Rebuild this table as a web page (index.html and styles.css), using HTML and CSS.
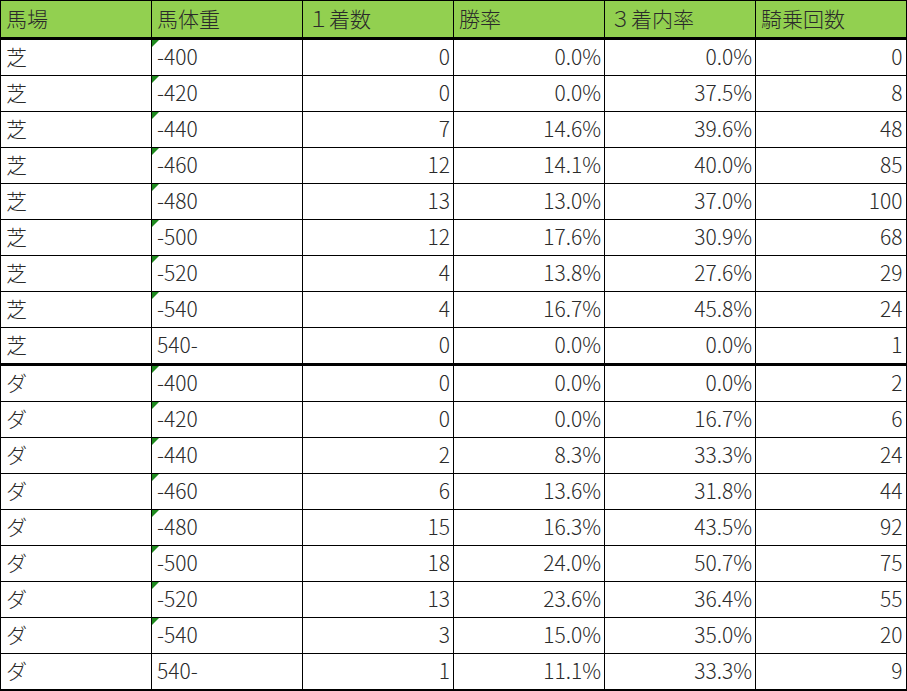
FILE: index.html
```html
<!DOCTYPE html>
<html lang="ja">
<head>
<meta charset="utf-8">
<link rel="stylesheet" href="styles.css">
</head>
<body>
<table class="sheet">
<colgroup>
<col class="c"><col class="c"><col class="c"><col class="c"><col class="c"><col class="c">
</colgroup>
<thead>
<tr><th>馬場</th><th>馬体重</th><th>１着数</th><th>勝率</th><th>３着内率</th><th>騎乗回数</th></tr>
</thead>
<tbody>
<tr><td>芝</td><td class="txt flag">-400</td><td class="num">0</td><td class="num">0.0%</td><td class="num">0.0%</td><td class="num">0</td></tr>
<tr><td>芝</td><td class="txt flag">-420</td><td class="num">0</td><td class="num">0.0%</td><td class="num">37.5%</td><td class="num">8</td></tr>
<tr><td>芝</td><td class="txt flag">-440</td><td class="num">7</td><td class="num">14.6%</td><td class="num">39.6%</td><td class="num">48</td></tr>
<tr><td>芝</td><td class="txt flag">-460</td><td class="num">12</td><td class="num">14.1%</td><td class="num">40.0%</td><td class="num">85</td></tr>
<tr><td>芝</td><td class="txt flag">-480</td><td class="num">13</td><td class="num">13.0%</td><td class="num">37.0%</td><td class="num">100</td></tr>
<tr><td>芝</td><td class="txt flag">-500</td><td class="num">12</td><td class="num">17.6%</td><td class="num">30.9%</td><td class="num">68</td></tr>
<tr><td>芝</td><td class="txt flag">-520</td><td class="num">4</td><td class="num">13.8%</td><td class="num">27.6%</td><td class="num">29</td></tr>
<tr><td>芝</td><td class="txt flag">-540</td><td class="num">4</td><td class="num">16.7%</td><td class="num">45.8%</td><td class="num">24</td></tr>
<tr class="group-end"><td>芝</td><td class="txt">540-</td><td class="num">0</td><td class="num">0.0%</td><td class="num">0.0%</td><td class="num">1</td></tr>
<tr><td>ダ</td><td class="txt flag">-400</td><td class="num">0</td><td class="num">0.0%</td><td class="num">0.0%</td><td class="num">2</td></tr>
<tr><td>ダ</td><td class="txt flag">-420</td><td class="num">0</td><td class="num">0.0%</td><td class="num">16.7%</td><td class="num">6</td></tr>
<tr><td>ダ</td><td class="txt flag">-440</td><td class="num">2</td><td class="num">8.3%</td><td class="num">33.3%</td><td class="num">24</td></tr>
<tr><td>ダ</td><td class="txt flag">-460</td><td class="num">6</td><td class="num">13.6%</td><td class="num">31.8%</td><td class="num">44</td></tr>
<tr><td>ダ</td><td class="txt flag">-480</td><td class="num">15</td><td class="num">16.3%</td><td class="num">43.5%</td><td class="num">92</td></tr>
<tr><td>ダ</td><td class="txt flag">-500</td><td class="num">18</td><td class="num">24.0%</td><td class="num">50.7%</td><td class="num">75</td></tr>
<tr><td>ダ</td><td class="txt flag">-520</td><td class="num">13</td><td class="num">23.6%</td><td class="num">36.4%</td><td class="num">55</td></tr>
<tr><td>ダ</td><td class="txt flag">-540</td><td class="num">3</td><td class="num">15.0%</td><td class="num">35.0%</td><td class="num">20</td></tr>
<tr><td>ダ</td><td class="txt">540-</td><td class="num">1</td><td class="num">11.1%</td><td class="num">33.3%</td><td class="num">9</td></tr>
</tbody>
</table>
</body>
</html>
```

FILE: styles.css
```css
html, body {
  margin: 0;
  padding: 0;
  background: #ffffff;
}

.sheet {
  border-collapse: collapse;
  table-layout: fixed;
  width: 907px;
  font-family: "Noto Sans CJK JP", "Noto Sans", sans-serif;
  font-size: 21px;
  font-weight: 300;
  color: #2a2a2a;
  border-top: 1px solid #000;
  border-left: 1px solid #000;
  border-right: 2px solid #000;
  border-bottom: 2px solid #000;
}

.sheet .c {
  width: 151px;
}

.sheet th,
.sheet td {
  border: 1px solid #000;
  padding: 0 3px 3px 5px;
  line-height: 26px;
  white-space: nowrap;
  text-align: left;
  font-weight: 300;
}

.sheet th {
  background: #92d050;
  height: 33px;
  border-bottom: 3px solid #000;
}

.sheet td {
  height: 32px;
  position: relative;
}

.sheet td.num {
  text-align: right;
}

.sheet tr.group-end td {
  border-bottom: 3px solid #000;
}

.sheet td.flag::before {
  content: "";
  position: absolute;
  left: 0;
  top: 0;
  width: 0;
  height: 0;
  border-top: 7px solid #1e8a1e;
  border-right: 7px solid transparent;
}
```
